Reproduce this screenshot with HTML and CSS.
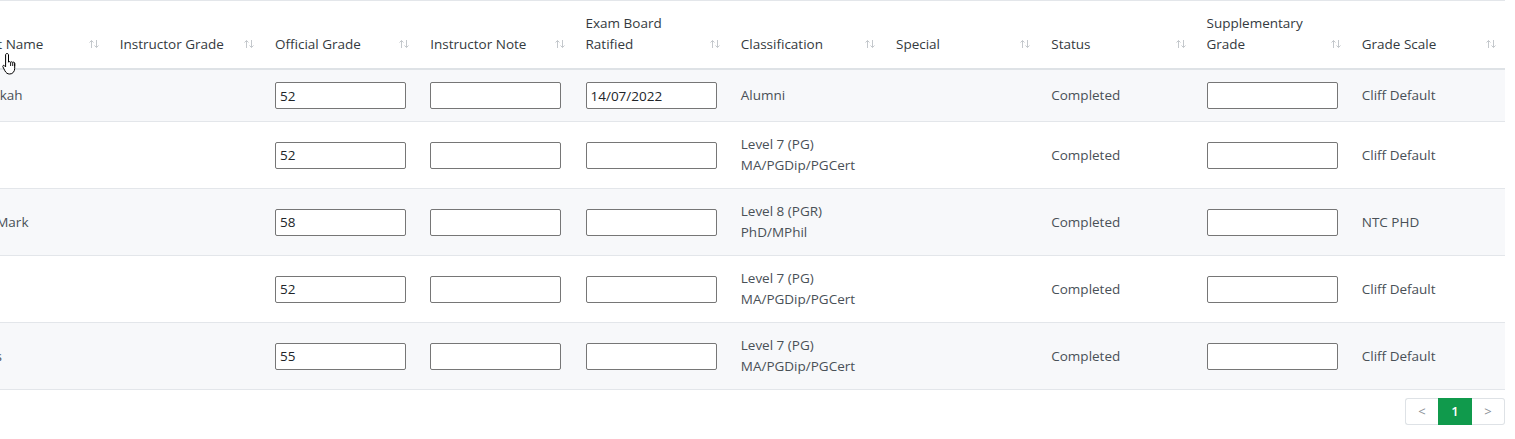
FILE: index.html
```html
<!DOCTYPE html>
<html lang="en">
<head>
    <meta charset="UTF-8">
    <meta name="viewport" content="width=device-width, initial-scale=1.0">
    <title>Grades</title>
    <link rel="stylesheet" href="styles.css">
</head>
<body>
    <div class="grid-wrap">
        <div class="scroller">
            <table class="grades">
                <colgroup>
                    <col class="col-name">
                    <col span="9" class="col-std">
                </colgroup>
                <thead>
                    <tr>
                        <th><div class="th-in"><span>Student Name</span><svg class="sort" viewBox="0 0 12 10"><path d="M3.5 9V1.5M1.5 3.5L3.5 1.5L5.5 3.5M8.5 1V8.5M6.5 6.5L8.5 8.5L10.5 6.5"/></svg></div></th>
                        <th><div class="th-in"><span>Instructor Grade</span><svg class="sort" viewBox="0 0 12 10"><path d="M3.5 9V1.5M1.5 3.5L3.5 1.5L5.5 3.5M8.5 1V8.5M6.5 6.5L8.5 8.5L10.5 6.5"/></svg></div></th>
                        <th><div class="th-in"><span>Official Grade</span><svg class="sort" viewBox="0 0 12 10"><path d="M3.5 9V1.5M1.5 3.5L3.5 1.5L5.5 3.5M8.5 1V8.5M6.5 6.5L8.5 8.5L10.5 6.5"/></svg></div></th>
                        <th><div class="th-in"><span>Instructor Note</span><svg class="sort" viewBox="0 0 12 10"><path d="M3.5 9V1.5M1.5 3.5L3.5 1.5L5.5 3.5M8.5 1V8.5M6.5 6.5L8.5 8.5L10.5 6.5"/></svg></div></th>
                        <th><div class="th-in"><span>Exam Board<br>Ratified</span><svg class="sort" viewBox="0 0 12 10"><path d="M3.5 9V1.5M1.5 3.5L3.5 1.5L5.5 3.5M8.5 1V8.5M6.5 6.5L8.5 8.5L10.5 6.5"/></svg></div></th>
                        <th><div class="th-in"><span>Classification</span><svg class="sort" viewBox="0 0 12 10"><path d="M3.5 9V1.5M1.5 3.5L3.5 1.5L5.5 3.5M8.5 1V8.5M6.5 6.5L8.5 8.5L10.5 6.5"/></svg></div></th>
                        <th><div class="th-in"><span>Special</span><svg class="sort" viewBox="0 0 12 10"><path d="M3.5 9V1.5M1.5 3.5L3.5 1.5L5.5 3.5M8.5 1V8.5M6.5 6.5L8.5 8.5L10.5 6.5"/></svg></div></th>
                        <th><div class="th-in"><span>Status</span><svg class="sort" viewBox="0 0 12 10"><path d="M3.5 9V1.5M1.5 3.5L3.5 1.5L5.5 3.5M8.5 1V8.5M6.5 6.5L8.5 8.5L10.5 6.5"/></svg></div></th>
                        <th><div class="th-in"><span>Supplementary<br>Grade</span><svg class="sort" viewBox="0 0 12 10"><path d="M3.5 9V1.5M1.5 3.5L3.5 1.5L5.5 3.5M8.5 1V8.5M6.5 6.5L8.5 8.5L10.5 6.5"/></svg></div></th>
                        <th><div class="th-in"><span>Grade Scale</span><svg class="sort" viewBox="0 0 12 10"><path d="M3.5 9V1.5M1.5 3.5L3.5 1.5L5.5 3.5M8.5 1V8.5M6.5 6.5L8.5 8.5L10.5 6.5"/></svg></div></th>
                    </tr>
                </thead>
                <tbody>
                    <tr>
                        <td>Jo Rebekah</td>
                        <td></td>
                        <td><input class="cell-input" type="text" value="52"></td>
                        <td><input class="cell-input" type="text" value=""></td>
                        <td><input class="cell-input" type="text" value="14/07/2022"></td>
                        <td>Alumni</td>
                        <td></td>
                        <td>Completed</td>
                        <td><input class="cell-input" type="text" value=""></td>
                        <td>Cliff Default</td>
                    </tr>
                    <tr>
                        <td>Jo Lee</td>
                        <td></td>
                        <td><input class="cell-input" type="text" value="52"></td>
                        <td><input class="cell-input" type="text" value=""></td>
                        <td><input class="cell-input" type="text" value=""></td>
                        <td>Level 7 (PG)<br>MA/PGDip/PGCert</td>
                        <td></td>
                        <td>Completed</td>
                        <td><input class="cell-input" type="text" value=""></td>
                        <td>Cliff Default</td>
                    </tr>
                    <tr>
                        <td>Daniel Mark</td>
                        <td></td>
                        <td><input class="cell-input" type="text" value="58"></td>
                        <td><input class="cell-input" type="text" value=""></td>
                        <td><input class="cell-input" type="text" value=""></td>
                        <td>Level 8 (PGR)<br>PhD/MPhil</td>
                        <td></td>
                        <td>Completed</td>
                        <td><input class="cell-input" type="text" value=""></td>
                        <td>NTC PHD</td>
                    </tr>
                    <tr>
                        <td>Amy Li</td>
                        <td></td>
                        <td><input class="cell-input" type="text" value="52"></td>
                        <td><input class="cell-input" type="text" value=""></td>
                        <td><input class="cell-input" type="text" value=""></td>
                        <td>Level 7 (PG)<br>MA/PGDip/PGCert</td>
                        <td></td>
                        <td>Completed</td>
                        <td><input class="cell-input" type="text" value=""></td>
                        <td>Cliff Default</td>
                    </tr>
                    <tr>
                        <td>Jo Jones</td>
                        <td></td>
                        <td><input class="cell-input" type="text" value="55"></td>
                        <td><input class="cell-input" type="text" value=""></td>
                        <td><input class="cell-input" type="text" value=""></td>
                        <td>Level 7 (PG)<br>MA/PGDip/PGCert</td>
                        <td></td>
                        <td>Completed</td>
                        <td><input class="cell-input" type="text" value=""></td>
                        <td>Cliff Default</td>
                    </tr>
                </tbody>
            </table>
        </div>
        <div class="pager">
            <span class="page-btn">&lt;</span>
            <span class="page-btn active">1</span>
            <span class="page-btn">&gt;</span>
        </div>
    </div>
    <!-- mouse pointer over the name header -->
    <svg class="pointer" viewBox="0 0 16 24" width="16" height="24">
        <path d="M5 1.5c.9 0 1.5.6 1.5 1.5v7.2c.3-.7 1.7-.8 2.1.1.4-.7 1.8-.7 2.1.2.5-.6 1.9-.4 2 .6v5.2c0 3.3-2 5.7-5 5.7-2.4 0-3.5-1-4.8-3.2L.9 14.8c-.5-.9.4-1.9 1.4-1.2l1.3 1.3V3c0-.9.5-1.5 1.4-1.5z" fill="#fff" stroke="#000" stroke-width="1"/>
        <path d="M8.6 10.4v3.6M10.7 10.7v3.3M12.7 11.3v2.8" stroke="#000" stroke-width="0.9" fill="none"/>
    </svg>
</body>
</html>
```

FILE: styles.css
```css
body{
    margin: 0;
    font-family: "Open Sans", "Noto Sans", sans-serif;
    font-size: 13.5px;
    color: #495057;
    background: #fff;
}
.grid-wrap{
    width: 1505px;
}
.scroller{
    overflow: hidden;
    border-top: 1px solid #e3e6ea;
}
.grades{
    border-collapse: collapse;
    table-layout: fixed;
    width: 1564.25px;
    margin-left: -59.25px;
}
.col-name{
    width: 167px;
}
.col-std{
    width: 155.25px;
}
.grades th{
    font-weight: normal;
    color: #343a40;
    text-align: left;
    vertical-align: bottom;
    line-height: 21px;
    padding: 12px 8px 13px 12px;
    border-bottom: 2px solid #dee2e6;
}
.th-in{
    display: flex;
    justify-content: space-between;
    align-items: flex-end;
}
.sort{
    width: 12px;
    height: 10px;
    margin-bottom: 6px;
    flex-shrink: 0;
}
.sort path{
    fill: none;
    stroke: #c4c8cc;
    stroke-width: 1;
}
.grades td{
    padding: 12px;
    line-height: 21px;
    vertical-align: middle;
    border-bottom: 1px solid #e3e6ea;
    white-space: nowrap;
    overflow: hidden;
}
.grades tbody tr:nth-child(odd){
    background: #f7f8fa;
}
.cell-input{
    box-sizing: border-box;
    display: block;
    width: 131px;
    height: 27px;
    margin: 0;
    padding: 0 4px;
    border: 1px solid #767676;
    border-radius: 2px;
    background: #fff;
    font-family: inherit;
    font-size: 13.5px;
    color: #212529;
}
.pager{
    display: flex;
    justify-content: flex-end;
    margin-top: 8px;
}
.page-btn{
    box-sizing: border-box;
    height: 27px;
    line-height: 25px;
    text-align: center;
    color: #8a9096;
    border: 1px solid #dee2e6;
    font-size: 13px;
}
.page-btn:first-child{
    width: 33px;
    border-radius: 3px 0 0 3px;
    border-right: none;
}
.page-btn.active{
    width: 34px;
    background: #109a4c;
    border-color: #109a4c;
    color: #fff;
    font-weight: 600;
}
.page-btn:last-child{
    width: 33px;
    border-radius: 0 3px 3px 0;
    border-left: none;
}
.pointer{
    position: absolute;
    left: 2px;
    top: 52px;
}
```
